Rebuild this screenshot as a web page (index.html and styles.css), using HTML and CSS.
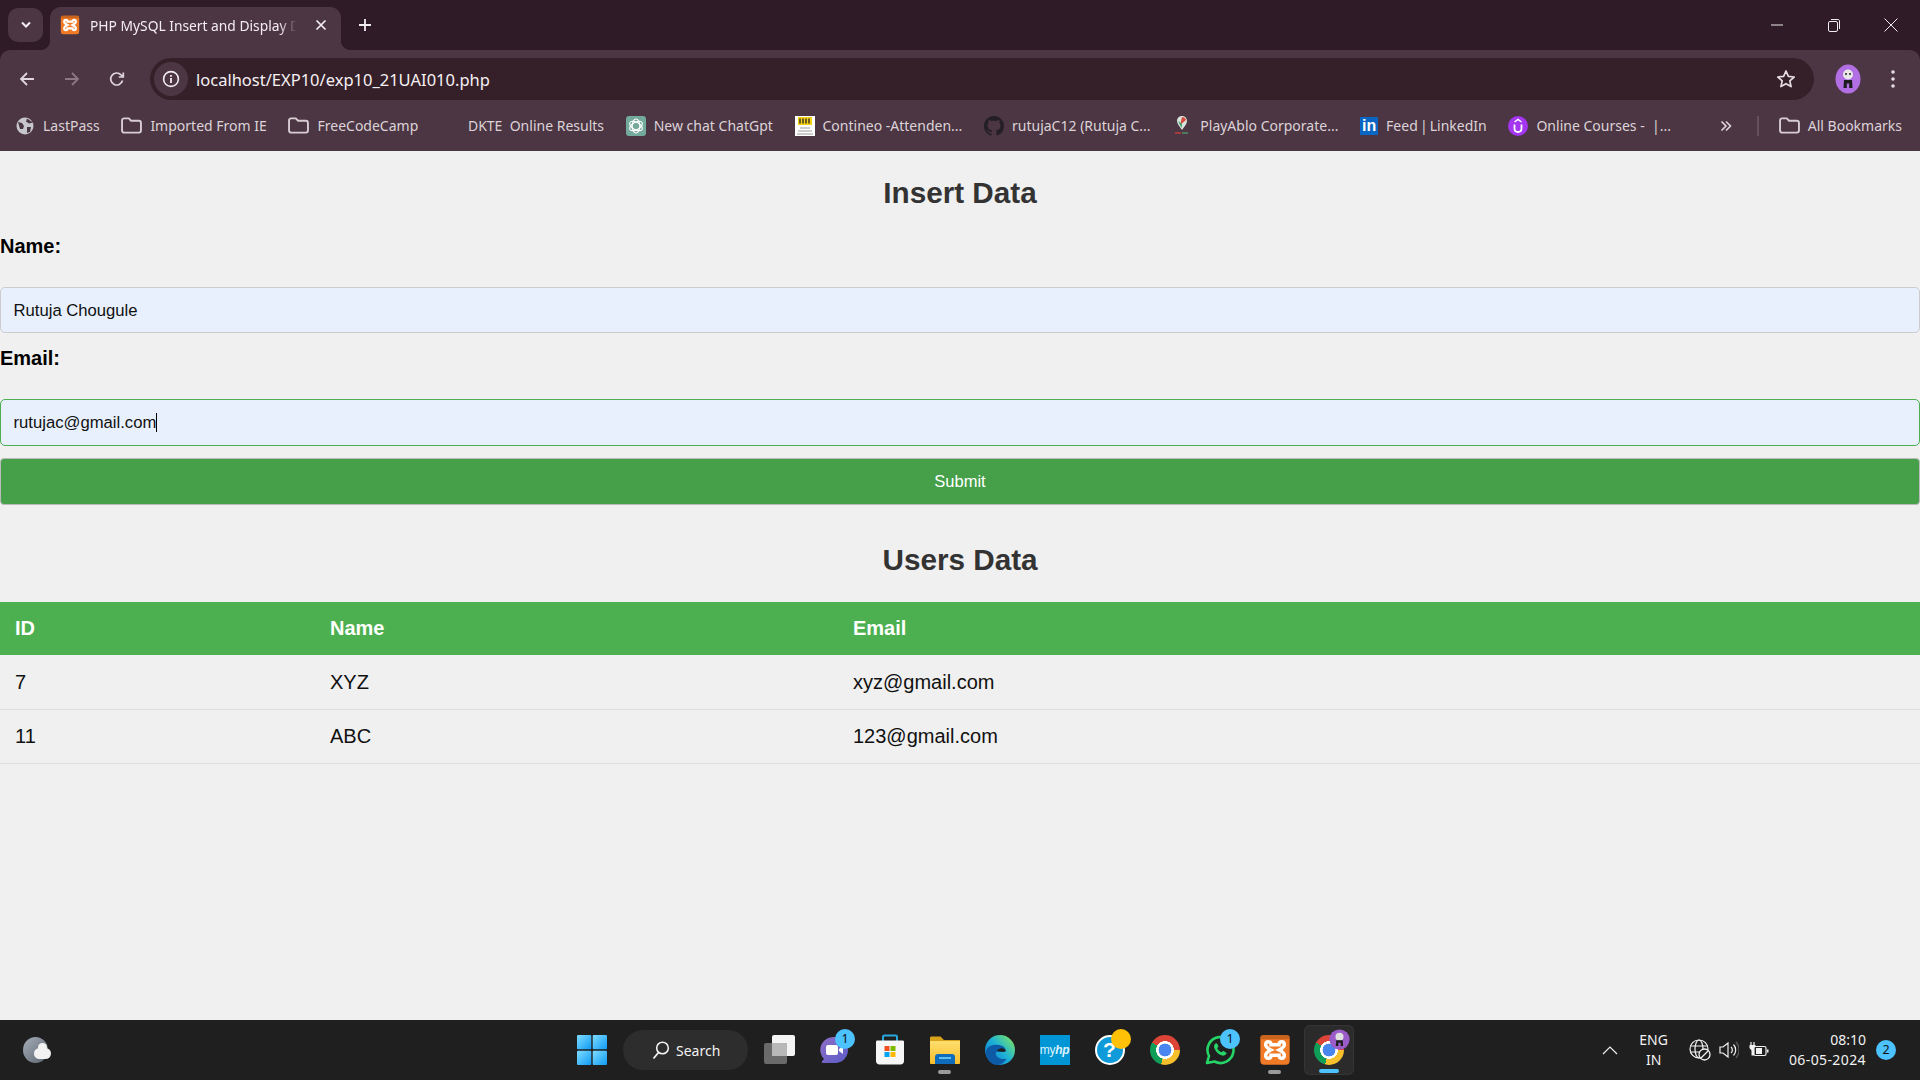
FILE: index.html
```html
<!DOCTYPE html>
<html lang="en">
<head>
  <meta charset="UTF-8" />
  <title>PHP MySQL Insert and Display Data</title>
  <link rel="stylesheet" href="styles.css">
</head>
<body>
  <svg class="defs" width="0" height="0">
    <defs>
      <symbol id="folder" viewBox="0 0 20 16">
        <path d="M1 3.2C1 2 1.8 1.2 3 1.2h4.4l2.2 2.3H17c1.2 0 2 .8 2 2v7.3c0 1.2-.8 2-2 2H3c-1.2 0-2-.8-2-2z" fill="none" stroke="#d9cdd4" stroke-width="1.8"/>
      </symbol>
      <symbol id="xampp" viewBox="0 0 24 24">
        <rect x="1" y="1" width="22" height="22" rx="3" fill="#f07a25"/>
        <rect x="1" y="1" width="22" height="3" rx="1.5" fill="#c9641e"/>
        <path d="M9 8C9 5 5 5 5 8C5 10 7 11 9 12C7 13 5 14 5 16C5 19 9 19 9 16L15 16C15 19 19 19 19 16C19 14 17 13 15 12C17 11 19 10 19 8C19 5 15 5 15 8Z" fill="none" stroke="#fff" stroke-width="2.600"/>
      </symbol>
      <linearGradient id="winblue" x1="0" y1="0" x2="1" y2="1">
        <stop offset="0" stop-color="#7fdcff"/>
        <stop offset="1" stop-color="#0f9bf5"/>
      </linearGradient>
      <linearGradient id="teamsgrad" x1="0" y1="0" x2="1" y2="1">
        <stop offset="0" stop-color="#8f6fc4"/>
        <stop offset="1" stop-color="#5b5bc9"/>
      </linearGradient>
      <linearGradient id="edgegrad" x1="0.1" y1="0.8" x2="0.9" y2="0.1">
        <stop offset="0" stop-color="#0f7fd0"/>
        <stop offset="0.5" stop-color="#1fb3d6"/>
        <stop offset="1" stop-color="#74e06a"/>
      </linearGradient>
      <linearGradient id="foldergrad" x1="0" y1="0" x2="0" y2="1">
        <stop offset="0" stop-color="#ffdf6e"/>
        <stop offset="1" stop-color="#f9bd2b"/>
      </linearGradient>
    </defs>
  </svg>

  <header class="browser">
    <div class="tabstrip">
      <button class="tab-search">
        <svg width="12" height="8" viewBox="0 0 12 8"><path d="M2 1.5l4 4 4-4" fill="none" stroke="#f3edf1" stroke-width="2"/></svg>
      </button>
      <div class="tab">
        <svg class="tab-icon" width="20" height="20"><use href="#xampp"/></svg>
        <span class="tab-title">PHP MySQL Insert and Display D</span>
        <svg class="tab-close" width="12" height="12" viewBox="0 0 12 12"><path d="M1.5 1.5l9 9M10.5 1.5l-9 9" stroke="#f3edf1" stroke-width="1.7"/></svg>
      </div>
      <svg class="tab-new" width="14" height="14" viewBox="0 0 14 14"><path d="M7 1v12M1 7h12" stroke="#f3edf1" stroke-width="1.8"/></svg>
      <div class="win-controls">
        <svg width="14" height="14" viewBox="0 0 14 14"><path d="M1 7h12" stroke="#f0ecee" stroke-width="1"/></svg>
        <svg width="14" height="14" viewBox="0 0 14 14"><rect x="1.5" y="3.5" width="9" height="10" rx="1.5" fill="none" stroke="#f0ecee"/><path d="M4 1.5h7c1 0 1.500.5 1.500 1.500v8" fill="none" stroke="#f0ecee"/></svg>
        <svg width="14" height="14" viewBox="0 0 14 14"><path d="M.5.5l13 13M13.500.5l-13 13" stroke="#f0ecee" stroke-width="1"/></svg>
      </div>
    </div>

    <div class="toolbar">
      <svg class="nav-btn" width="16" height="16" viewBox="0 0 16 16"><path d="M15 8H2M8 2L2 8l6 6" fill="none" stroke="#e0d5dc" stroke-width="1.800"/></svg>
      <svg class="nav-btn" width="16" height="16" viewBox="0 0 16 16"><path d="M1 8h13M8 2l6 6-6 6" fill="none" stroke="#8b7883" stroke-width="1.800"/></svg>
      <svg class="nav-btn" width="16" height="16" viewBox="0 0 16 16"><path d="M13.500 9.500A6 6 0 1 1 12 3.800L14 6M14.300 1.500V6H9.800" fill="none" stroke="#e0d5dc" stroke-width="1.700"/></svg>
      <div class="omnibox">
        <span class="site-info">
          <svg width="18" height="18" viewBox="0 0 18 18"><circle cx="9" cy="9" r="7.400" fill="none" stroke="#f3edf1" stroke-width="1.600"/><path d="M9 8v5M9 5v1.800" stroke="#f3edf1" stroke-width="1.800"/></svg>
        </span>
        <span class="url">localhost/EXP10/exp10_21UAI010.php</span>
        <svg class="star" width="20" height="20" viewBox="0 0 20 20"><path d="M10 2l2.400 5.400 5.800.6-4.400 3.900 1.300 5.700L10 14.700l-5.100 2.900 1.300-5.700L1.800 8l5.800-.6z" fill="none" stroke="#e6dce2" stroke-width="1.700" stroke-linejoin="round"/></svg>
      </div>
      <svg class="avatar" width="26" height="30" viewBox="0 0 26 30">
        <ellipse cx="13" cy="15" rx="12.500" ry="14.500" fill="#b26fe3"/>
        <circle cx="13" cy="10.500" r="5" fill="#e8e8e8"/>
        <circle cx="11" cy="10" r="1" fill="#222"/><circle cx="15" cy="10" r="1" fill="#222"/>
        <path d="M9 16h8l.5 8h-3.300v-4.500h-2.400V24H8.500z" fill="#1c1c1c"/>
      </svg>
      <svg class="menu-dots" width="6" height="20" viewBox="0 0 6 20"><circle cx="3" cy="3" r="1.800" fill="#e6dce2"/><circle cx="3" cy="10" r="1.800" fill="#e6dce2"/><circle cx="3" cy="17" r="1.800" fill="#e6dce2"/></svg>
    </div>

    <nav class="bookmarks">
      <a class="bm">
        <svg width="20" height="20" viewBox="0 0 20 20"><circle cx="10" cy="10" r="8.500" fill="#c6c6cb"/><path d="M3 6l4 1 2 3-1 3-3 0zM12 2.500l-1 3 3 2 4-1zM12 11l4 0-1 5-3 1z" fill="#4c3643"/></svg>
        <span>LastPass</span>
      </a>
      <a class="bm"><svg width="21" height="17"><use href="#folder"/></svg><span>Imported From IE</span></a>
      <a class="bm"><svg width="21" height="17"><use href="#folder"/></svg><span>FreeCodeCamp</span></a>
      <a class="bm bm-noicon"><span>DKTE&nbsp; Online Results</span></a>
      <a class="bm">
        <svg width="20" height="20" viewBox="0 0 20 20">
          <rect width="20" height="20" rx="3" fill="#74aa9c"/>
          <g fill="none" stroke="#fff" stroke-width="1.100">
            <ellipse cx="10" cy="10" rx="3.800" ry="7"/>
            <ellipse cx="10" cy="10" rx="3.800" ry="7" transform="rotate(60 10 10)"/>
            <ellipse cx="10" cy="10" rx="3.800" ry="7" transform="rotate(120 10 10)"/>
          </g>
        </svg>
        <span>New chat ChatGpt</span>
      </a>
      <a class="bm">
        <svg width="20" height="20" viewBox="0 0 20 20">
          <rect width="20" height="20" fill="#fff"/>
          <rect x="3" y="1" width="14" height="8" fill="#f7d117"/>
          <path d="M5 2.500v5M8 2.500v5M11 2.500v5M14 2.500v5" stroke="#222" stroke-width="1.300"/>
          <path d="M5 12h10M3 15h14M2 18h16" stroke="#9a9a9a" stroke-width="1"/>
        </svg>
        <span>Contineo -Attenden...</span>
      </a>
      <a class="bm">
        <svg width="20" height="20" viewBox="0 0 16 16"><path fill="#231f24" d="M8 0C3.580 0 0 3.580 0 8c0 3.540 2.290 6.530 5.470 7.590.4.070.55-.17.55-.38 0-.19-.01-.82-.01-1.490-2.010.37-2.530-.49-2.690-.94-.09-.23-.48-.94-.82-1.130-.28-.15-.68-.52-.01-.53.63-.01 1.080.58 1.230.82.72 1.210 1.870.87 2.330.66.070-.52.28-.87.51-1.070-1.780-.2-3.640-.89-3.640-3.950 0-.87.31-1.590.82-2.150-.08-.2-.36-1.020.08-2.120 0 0 .67-.21 2.200.82.64-.18 1.320-.27 2-.27.68 0 1.360.09 2 .27 1.530-1.040 2.200-.82 2.200-.82.44 1.100.16 1.920.08 2.120.51.56.82 1.270.82 2.150 0 3.070-1.870 3.750-3.650 3.950.29.25.54.73.54 1.480 0 1.070-.01 1.930-.01 2.200 0 .21.15.46.55.38A8.013 8.013 0 0016 8c0-4.420-3.580-8-8-8z"/></svg>
        <span>rutujaC12 (Rutuja C...</span>
      </a>
      <a class="bm">
        <svg width="20" height="20" viewBox="0 0 20 20">
          <path d="M10 0c3 0 5 2.200 5 5 0 3-3 6-5 9-2-3-5-6-5-9 0-2.800 2-5 5-5z" fill="#d8e4dc"/>
          <path d="M10 1c1.800 0 3.500 1.200 4 3L8 9z" fill="#d94a3d"/>
          <path d="M6 5l4 3-.5 4z" fill="#3d9a6a"/>
          <path d="M3 17h6" stroke="#a33b3b" stroke-width="2"/><path d="M10 17h6" stroke="#4d7a60" stroke-width="2"/>
        </svg>
        <span>PlayAblo Corporate...</span>
      </a>
      <a class="bm"><span class="linkedin">in</span><span class="bm-tight">Feed | LinkedIn</span></a>
      <a class="bm">
        <svg width="20" height="20" viewBox="0 0 20 20">
          <circle cx="10" cy="10" r="10" fill="#a435f0"/>
          <path d="M6.500 8.500v4c0 2 1.500 3.500 3.500 3.500s3.500-1.500 3.500-3.500v-4" fill="none" stroke="#fff" stroke-width="1.800"/>
          <path d="M6.500 6L10 3.500 13.500 6" fill="none" stroke="#fff" stroke-width="1.500"/>
        </svg>
        <span>Online Courses - &nbsp;|...</span>
      </a>
      <svg class="bm-more" width="12" height="12" viewBox="0 0 12 12"><path d="M1.500 1.500L6 6l-4.500 4.500M6 1.500L10.500 6 6 10.500" fill="none" stroke="#e0d5dc" stroke-width="1.600"/></svg>
      <span class="bm-sep"></span>
      <a class="bm"><svg width="21" height="17"><use href="#folder"/></svg><span>All Bookmarks</span></a>
    </nav>
  </header>

  <main class="page">
    <h2>Insert Data</h2>
    <form class="user-form">
      <label>Name:</label>
      <div class="field">Rutuja Chougule</div>
      <label>Email:</label>
      <div class="field field-focus">rutujac@gmail.com<span class="caret"></span></div>
      <button type="button" class="submit">Submit</button>
    </form>

    <h2 class="users-title">Users Data</h2>
    <table>
      <colgroup><col class="col-id"><col class="col-name"><col></colgroup>
      <thead>
        <tr><th>ID</th><th>Name</th><th>Email</th></tr>
      </thead>
      <tbody>
        <tr><td>7</td><td>XYZ</td><td>xyz@gmail.com</td></tr>
        <tr><td>11</td><td>ABC</td><td>123@gmail.com</td></tr>
      </tbody>
    </table>
  </main>

  <footer class="taskbar">
    <div class="weather"><span class="moon"></span><span class="cloud"></span></div>

    <div class="task-center">
      <div class="task-icon">
        <svg width="30" height="30" viewBox="0 0 30 30">
          <rect width="14.300" height="14.300" rx="1" fill="url(#winblue)"/>
          <rect x="15.700" width="14.300" height="14.300" rx="1" fill="url(#winblue)"/>
          <rect y="15.700" width="14.300" height="14.300" rx="1" fill="url(#winblue)"/>
          <rect x="15.700" y="15.700" width="14.300" height="14.300" rx="1" fill="url(#winblue)"/>
        </svg>
      </div>
      <div class="search-pill">
        <svg width="18" height="20" viewBox="0 0 18 20"><circle cx="10.500" cy="8" r="5.800" fill="none" stroke="#f2f2f2" stroke-width="1.600"/><path d="M6.500 12.500L1.500 18.500" stroke="#f2f2f2" stroke-width="1.800"/></svg>
        <span>Search</span>
      </div>
      <div class="task-icon task-view">
        <svg width="32" height="30" viewBox="0 0 32 30">
          <rect x="0" y="8" width="23" height="21" rx="2" fill="#6a6a6a"/>
          <rect x="8" y="0" width="23" height="21" rx="2" fill="#f4f4f4"/>
          <rect x="8" y="8" width="15" height="13" fill="#b8b8b8"/>
        </svg>
      </div>

      <div class="task-icon">
        <svg width="30" height="30" viewBox="0 0 30 30">
          <path d="M15 2a13 13 0 0 1 0 26H3c-1 0-1.500-1-1-1.700L4 24A13 13 0 0 1 15 2z" fill="url(#teamsgrad)"/>
          <rect x="6" y="10" width="12" height="10" rx="2" fill="#fff"/>
          <path d="M19 14l4-3v8l-4-3z" fill="#fff"/>
        </svg>
        <span class="badge">1</span>
      </div>
      <div class="task-icon">
        <svg width="30" height="32" viewBox="0 0 30 32">
          <path d="M8 7V3c0-1 .5-1.500 1.500-1.500h11c1 0 1.500.5 1.500 1.500v4" fill="none" stroke="#29a8e0" stroke-width="2"/>
          <path d="M1 8c0-1 .5-1.500 1.500-1.500h25c1 0 1.500.5 1.500 1.500v19c0 2-1.500 3.500-3.500 3.500h-21C2.500 30.500 1 29 1 27z" fill="#f7f7f7"/>
          <rect x="9.500" y="12" width="5" height="5" fill="#f25022"/><rect x="15.500" y="12" width="5" height="5" fill="#7fba00"/>
          <rect x="9.500" y="18" width="5" height="5" fill="#00a4ef"/><rect x="15.500" y="18" width="5" height="5" fill="#ffb900"/>
        </svg>
      </div>
      <div class="task-icon">
        <svg width="30" height="30" viewBox="0 0 30 30">
          <path d="M0 3c0-1 .5-1.500 1.500-1.500h9L14 5h16v4H0z" fill="#d9a21b"/>
          <path d="M0 6h30v22c0 .5-.5 1-1 1H1c-.5 0-1-.5-1-1z" fill="url(#foldergrad)"/>
          <path d="M5 29v-7c0-2 1-3 3-3h14c2 0 3 1 3 3v7z" fill="#0f6cbd"/>
          <rect x="9" y="22" width="12" height="2" fill="#5cc0f0"/>
        </svg>
        <span class="running"></span>
      </div>
      <div class="task-icon">
        <svg width="30" height="30" viewBox="0 0 30 30">
          <circle cx="15" cy="15" r="15" fill="url(#edgegrad)"/>
          <path d="M.5 17C2 10 11 8 17.500 11c3 1.500 3.500 4 3 5.500-3 .5-8.500.3-8.500.3-2 .7-1.500 3.500.5 5.200 2.500 2 5.500 2.300 9 1.800-2 3-5 6.200-9.500 6.200C6 30 1 24 .5 17z" fill="#0d5aa7"/>
          <path d="M12 16c1.500-3 5.500-3.500 8-1.500.5.500.6 1.300.5 2-3 .4-6 .3-8.500-.5z" fill="#1f1f1f"/>
        </svg>
      </div>
      <div class="task-icon"><span class="myhp">my<i>hp</i></span></div>
      <div class="task-icon">
        <span class="help">?</span>
        <span class="help-dot"></span>
      </div>
      <div class="task-icon"><span class="chrome"></span></div>
      <div class="task-icon">
        <svg width="30" height="30" viewBox="0 0 30 30">
          <path d="M2 28l2-7A13 13 0 1 1 9.500 26.500z" fill="none" stroke="#25d366" stroke-width="2.600" stroke-linejoin="round"/>
          <path d="M10.500 8.500c-1.500 1-2 3-1 5 1.500 3.500 4 6 7.500 7 2 .5 3.800-.5 4.500-2 .2-.7-.2-1-3-2.500-.7-.3-1.500 1-2 1.300-2-.7-3.500-2.300-4.300-4 .3-.6 1.500-1.300 1.200-2-1-2.800-1.500-3.500-2.900-2.800z" fill="#25d366"/>
        </svg>
        <span class="badge">1</span>
      </div>
      <div class="task-icon">
        <svg width="32" height="32"><use href="#xampp"/></svg>
        <span class="running"></span>
      </div>
      <div class="task-icon task-active">
        <span class="chrome"></span>
        <svg class="mini-profile" width="21" height="21" viewBox="0 0 26 26">
          <circle cx="13" cy="13" r="12.500" fill="#9a5cc9"/>
          <circle cx="13" cy="9.500" r="5" fill="#e0e0e0"/>
          <path d="M9 14h8l.5 7h-3v-4h-3v4h-3z" fill="#1c1c1c"/>
        </svg>
        <span class="active-line"></span>
      </div>
    </div>

    <div class="tray">
      <svg class="tray-up" width="16" height="10" viewBox="0 0 16 10"><path d="M1 9l7-7 7 7" fill="none" stroke="#efefef" stroke-width="1.200"/></svg>
      <div class="tray-lang"><span>ENG</span><span>IN</span></div>
      <svg class="tray-net" width="22" height="22" viewBox="0 0 22 22">
        <g fill="none" stroke="#f2f2f2" stroke-width="1.200">
          <circle cx="10" cy="10" r="9"/><ellipse cx="10" cy="10" rx="4" ry="9"/><path d="M1.500 7h17M1.500 13h17"/>
        </g>
        <circle cx="15.500" cy="15.500" r="5.500" fill="#1f1f1f" stroke="#f2f2f2" stroke-width="1.300"/>
        <path d="M12 19l7-7" stroke="#f2f2f2" stroke-width="1.300"/>
      </svg>
      <svg class="tray-vol" width="20" height="20" viewBox="0 0 20 20">
        <path d="M1 7h3l5-4v14l-5-4H1z" fill="none" stroke="#f2f2f2" stroke-width="1.200"/>
        <path d="M12 7a4 4 0 0 1 0 6" fill="none" stroke="#f2f2f2" stroke-width="1.200"/>
        <path d="M14.500 4.500a8 8 0 0 1 0 11" fill="none" stroke="#f2f2f2" stroke-width="1.200"/>
        <path d="M17 2a12 12 0 0 1 0 16" fill="none" stroke="#5a5a5a" stroke-width="1.200"/>
      </svg>
      <svg class="tray-bat" width="20" height="16" viewBox="0 0 20 16">
        <path d="M2 0v3M5 0v3" stroke="#f2f2f2" stroke-width="1.200"/>
        <path d="M0.500 3h6v3L5 8.500v5H2.500V8.500L.5 6z" fill="#f2f2f2"/>
        <rect x="5" y="4.500" width="12" height="9" rx="1.500" fill="#1f1f1f" stroke="#f2f2f2" stroke-width="1.200"/>
        <rect x="7" y="6" width="6" height="6" fill="#f2f2f2"/>
        <path d="M18 7.500h1.500v3H18z" fill="#f2f2f2"/>
      </svg>
      <div class="tray-clock"><span>08:10</span><span class="tray-date">06-05-2024</span></div>
      <span class="notif">2</span>
    </div>
  </footer>
</body>
</html>
```

FILE: styles.css
```css
html, body {
  margin: 0;
  height: 100%;
}
body {
  width: 1920px;
  height: 1080px;
  display: flex;
  flex-direction: column;
  overflow: hidden;
  font-family: "Liberation Sans", Arial, sans-serif;
  background: #f0f0f0;
}
.defs {
  position: absolute;
}

/* browser chrome */
.browser {
  height: 151px;
  flex: none;
  background: #2e1b27;
  font-family: "Noto Sans", "Open Sans", sans-serif;
}
.tabstrip {
  height: 50px;
  display: flex;
  align-items: flex-start;
  padding-left: 8px;
}
.tab-search {
  width: 35px;
  height: 34px;
  margin-top: 8px;
  padding: 0;
  border: none;
  border-radius: 10px;
  background: #4c3643;
  display: flex;
  align-items: center;
  justify-content: center;
}
.tab {
  position: relative;
  width: 291px;
  height: 43px;
  margin: 7px 0 0 7px;
  padding: 0 14px 7px 10px;
  box-sizing: border-box;
  display: flex;
  align-items: center;
  gap: 10px;
  background: #4c3643;
  border-radius: 11px 11px 0 0;
  color: #f3edf1;
  font-size: 13.800px;
}
.tab::before, .tab::after {
  content: "";
  position: absolute;
  bottom: 0;
  width: 10px;
  height: 10px;
}
.tab::before {
  left: -10px;
  background: radial-gradient(circle at 0 0, transparent 10px, #4c3643 10.500px);
}
.tab::after {
  right: -10px;
  background: radial-gradient(circle at 100% 0, transparent 10px, #4c3643 10.500px);
}
.tab-icon {
  flex: none;
}
.tab-title {
  flex: 1;
  white-space: nowrap;
  -webkit-mask-image: linear-gradient(90deg, #000 88%, transparent 96%);
  mask-image: linear-gradient(90deg, #000 88%, transparent 96%);
}
.tab-close {
  flex: none;
}
.tab-new {
  margin: 18px 0 0 17px;
}
.win-controls {
  margin-left: auto;
  display: flex;
  gap: 43px;
  padding: 18px 22px 0 0;
}
.toolbar {
  height: 55px;
  background: #4c3643;
  border-radius: 10px 10px 0 0;
  display: flex;
  align-items: center;
  padding: 3px 0 0 19px;
  box-sizing: border-box;
}
.nav-btn {
  margin-right: 29px;
  flex: none;
}
.omnibox {
  width: 1664px;
  height: 42px;
  margin-left: -4px;
  box-sizing: border-box;
  display: flex;
  align-items: center;
  padding: 0 18px 0 4px;
  background: #352029;
  border-radius: 21px;
  color: #f5f0f3;
  font-size: 16.500px;
}
.site-info {
  width: 34px;
  height: 34px;
  border-radius: 50%;
  background: #4c3643;
  display: flex;
  align-items: center;
  justify-content: center;
  margin-right: 8px;
}
.star {
  margin-left: auto;
}
.avatar {
  margin-left: 21px;
  flex: none;
}
.menu-dots {
  margin-left: 29px;
  flex: none;
}
.bookmarks {
  height: 46px;
  background: #4c3643;
  display: flex;
  align-items: center;
  padding: 0 18px 5px 15px;
  color: #dcd3d8;
  font-size: 14px;
  white-space: nowrap;
  overflow: hidden;
  box-sizing: border-box;
}
.bm {
  display: flex;
  align-items: center;
  gap: 8px;
  margin-right: 21.700px;
}
.bm:last-child {
  margin-right: 0;
}
.bm svg {
  flex: none;
}
.bm-noicon {
  padding-left: 28px;
}
.bm-tight {
  word-spacing: -1.500px;
}
.linkedin {
  width: 18px;
  height: 18px;
  background: #0a66c2;
  color: #fff;
  font: bold 16px/18px "Liberation Sans", sans-serif;
  text-align: center;
}
.bm-more {
  margin-left: auto;
  margin-right: 24.500px;
}
.bm-sep {
  width: 2px;
  height: 20px;
  background: #65505c;
  margin-right: 20px;
}

/* the page itself */
.page {
  flex: 1;
  min-height: 0;
}
h2 {
  margin: 25px 0 0;
  color: #333;
  font-size: 29.700px;
  line-height: 33px;
  text-align: center;
}
.user-form {
  display: flex;
  flex-direction: column;
}
label {
  font-size: 20px;
  font-weight: bold;
  line-height: 23px;
  color: #000;
  margin-bottom: 29px;
}
.user-form label:first-child {
  margin-top: 26px;
}
.field {
  height: 46px;
  box-sizing: border-box;
  margin-bottom: 14px;
  padding: 2px 12.500px 0;
  display: flex;
  align-items: center;
  background: #e8f0fe;
  border: 1.500px solid #ccc;
  border-radius: 5px;
  font-size: 16.670px;
  color: #111;
}
.field-focus {
  height: 47px;
  padding-top: 0;
  border-color: #4caf50;
  margin-bottom: 12px;
}
.caret {
  width: 1px;
  height: 19px;
  background: #000;
}
.submit {
  height: 47px;
  padding: 0;
  border: 1px solid #bbb;
  border-radius: 4px;
  background: #45a049;
  color: #fff;
  font-family: inherit;
  font-size: 16.500px;
}
.users-title {
  margin-top: 38px;
  margin-bottom: 26px;
}
table {
  width: 100%;
  border-collapse: collapse;
  table-layout: fixed;
  font-size: 20px;
}
.col-id {
  width: 315px;
}
.col-name {
  width: 523px;
}
th, td {
  padding: 15px;
  line-height: 23px;
  text-align: left;
}
th {
  background: #4caf50;
  color: #fff;
  font-weight: bold;
}
td {
  border-bottom: 1px solid #ddd;
  color: #111;
}
tbody tr:first-child td {
  padding-top: 16px;
}

/* windows taskbar */
.taskbar {
  height: 60px;
  flex: none;
  background: #1f1f1f;
  display: flex;
  align-items: center;
  font-family: "Noto Sans", "Open Sans", sans-serif;
  color: #f2f2f2;
}
.weather {
  position: relative;
  width: 30px;
  height: 28px;
  margin-left: 22px;
  flex: none;
}
.moon {
  position: absolute;
  left: 1px;
  top: 1px;
  width: 25px;
  height: 26px;
  border-radius: 50%;
  background: linear-gradient(135deg, #a5aeb8, #5d6670);
}
.cloud {
  position: absolute;
  left: 12px;
  top: 12px;
  width: 17px;
  height: 11px;
  border-radius: 6px;
  background: #f2f2f2;
}
.cloud::before {
  content: "";
  position: absolute;
  left: 4px;
  top: -5px;
  width: 9px;
  height: 9px;
  border-radius: 50%;
  background: #f2f2f2;
}
.task-center {
  display: flex;
  align-items: center;
  margin-left: 512px;
  height: 100%;
}
.task-icon {
  position: relative;
  width: 55px;
  height: 100%;
  flex: none;
  display: flex;
  align-items: center;
  justify-content: center;
}
.search-pill {
  width: 125px;
  height: 40px;
  margin-left: 4px;
  box-sizing: border-box;
  padding-left: 29px;
  display: flex;
  align-items: center;
  gap: 6px;
  background: #2d2d2d;
  border-radius: 20px;
  font-size: 14px;
  flex: none;
}
.task-view {
  margin: 0 0 0 4px;
}
.badge {
  position: absolute;
  left: 28px;
  top: 9px;
  width: 20px;
  height: 20px;
  border-radius: 50%;
  background: #4cc2ff;
  color: #111;
  font-size: 12.500px;
  line-height: 20px;
  text-align: center;
}
.running {
  position: absolute;
  left: 21px;
  bottom: 6px;
  width: 13px;
  height: 4px;
  border-radius: 2px;
  background: #9a9a9a;
}
.myhp {
  width: 30px;
  height: 30px;
  background: #0096d6;
  color: #dff2fb;
  font: 12px/30px "Liberation Sans", sans-serif;
  text-align: center;
  letter-spacing: -0.300px;
}
.myhp i {
  font-weight: bold;
}
.help {
  width: 26px;
  height: 26px;
  border: 2px solid #fff;
  border-radius: 50%;
  background: #0f9ad9;
  color: #fff;
  font: bold 21px/26px "Liberation Sans", sans-serif;
  text-align: center;
}
.help-dot {
  position: absolute;
  left: 29px;
  top: 9px;
  width: 20px;
  height: 20px;
  border-radius: 50%;
  background: #ffc107;
}
.chrome {
  width: 30px;
  height: 30px;
  border-radius: 50%;
  background:
    radial-gradient(closest-side, #4a86ef 42%, #fff 44% 58%, transparent 60%),
    conic-gradient(#db4437 0 90deg, #f6c02c 90deg 195deg, #0f9d58 195deg 300deg, #db4437 300deg);
}
.task-active {
  width: 50px;
  height: 50px;
  margin-left: 2px;
  background: #2b2b2b;
  border-radius: 6px;
  box-shadow: inset 0 0 0 1px #353535;
}
.mini-profile {
  position: absolute;
  right: 4px;
  top: 4px;
}
.active-line {
  position: absolute;
  left: 15px;
  bottom: 2px;
  width: 20px;
  height: 4px;
  border-radius: 2px;
  background: #4cc2ff;
}
.tray {
  margin-left: auto;
  display: flex;
  align-items: center;
  padding-right: 24px;
  height: 100%;
  font-size: 14px;
}
.tray-up {
  margin-right: 21px;
}
.tray-lang, .tray-clock {
  display: flex;
  flex-direction: column;
  line-height: 20px;
}
.tray-lang {
  align-items: center;
  margin-right: 21px;
}
.tray-net {
  margin-right: 8px;
}
.tray-vol {
  margin-right: 10px;
}
.tray-bat {
  margin-right: 20px;
}
.tray-clock {
  align-items: flex-end;
  margin-right: 10px;
}
.tray-date {
  letter-spacing: 0.400px;
}
.notif {
  width: 20px;
  height: 20px;
  border-radius: 50%;
  background: #4cc2ff;
  color: #111;
  font-size: 12.500px;
  line-height: 20px;
  text-align: center;
}
```
